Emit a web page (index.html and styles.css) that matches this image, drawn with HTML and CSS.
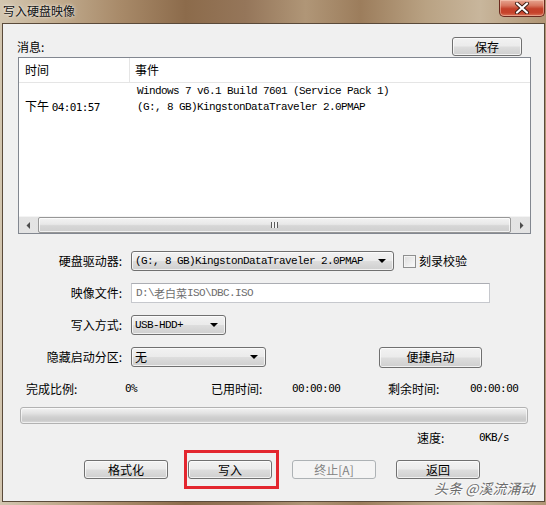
FILE: index.html
```
<!DOCTYPE html>
<html lang="zh">
<head>
<meta charset="utf-8">
<title>写入硬盘映像</title>
<link rel="stylesheet" href="styles.css">
</head>
<body>
<div class="window">
  <div class="titlebar">
    <span class="title">写入硬盘映像</span>
    <div class="close">
      <svg width="18" height="12" viewBox="0 0 18 12"><path d="M4 1.5 L14 10.5 M14 1.5 L4 10.5" stroke="#3a1a12" stroke-width="4" stroke-linecap="round"/><path d="M4 1.5 L14 10.5 M14 1.5 L4 10.5" stroke="#ffffff" stroke-width="2.2" stroke-linecap="round"/></svg>
    </div>
  </div>
  <div class="client">
    <div class="msg-head">
      <span class="msg-label">消息:</span>
      <button class="btn btn-save">保存</button>
    </div>
    <div class="list">
      <div class="list-header">
        <div class="col-time">时间</div>
        <div class="col-event">事件</div>
      </div>
      <div class="list-body">
        <div class="cell-time">下午 <span class="num">04:01:57</span></div>
        <div class="cell-event mono">
          <div class="line">Windows 7 v6.1 Build 7601 (Service Pack 1)</div>
          <div class="line">(G:, 8 GB)KingstonDataTraveler 2.0PMAP</div>
        </div>
      </div>
      <div class="hscroll">
        <div class="sb-btn"><svg width="5" height="7" viewBox="0 0 5 7"><path d="M4 0 L4 7 L0.5 3.5 Z" fill="#4d4d4d"/></svg></div>
        <div class="sb-thumb"><span class="grip"></span></div>
        <div class="sb-btn"><svg width="5" height="7" viewBox="0 0 5 7"><path d="M1 0 L1 7 L4.5 3.5 Z" fill="#4d4d4d"/></svg></div>
      </div>
    </div>

    <div class="form">
      <div class="frow">
        <span class="flabel">硬盘驱动器:</span>
        <div class="combo combo-drive"><span class="mono">(G:, 8 GB)KingstonDataTraveler 2.0PMAP</span><span class="arrow"></span></div>
        <span class="check"></span><span class="check-label">刻录校验</span>
      </div>
      <div class="frow">
        <span class="flabel">映像文件:</span>
        <div class="textbox"><span class="mono">D:\</span>老白菜<span class="mono">ISO\DBC.ISO</span></div>
      </div>
      <div class="frow">
        <span class="flabel">写入方式:</span>
        <div class="combo combo-mode"><span class="mono">USB-HDD+</span><span class="arrow"></span></div>
      </div>
      <div class="frow">
        <span class="flabel">隐藏启动分区:</span>
        <div class="combo combo-hide"><span>无</span><span class="arrow"></span></div>
        <button class="btn btn-quick">便捷启动</button>
      </div>
    </div>

    <div class="stats">
      <span class="s1">完成比例:</span>
      <span class="s2 num">0%</span>
      <span class="s3">已用时间:</span>
      <span class="s4 num">00:00:00</span>
      <span class="s5">剩余时间:</span>
      <span class="num">00:00:00</span>
    </div>
    <div class="progress"></div>
    <div class="speed">
      <span class="speed-label">速度:</span>
      <span class="num">0KB/s</span>
    </div>
    <div class="actions">
      <button class="btn btn-act">格式化</button>
      <div class="highlight"><button class="btn btn-act">写入</button></div>
      <button class="btn btn-act btn-disabled">终止[A]</button>
      <button class="btn btn-act">返回</button>
    </div>
  </div>
  <div class="watermark">头条 @溪流涌动</div>
</div>
</body>
</html>
```

FILE: styles.css
```
html, body {
  margin: 0;
  padding: 0;
}
body {
  width: 546px;
  height: 505px;
  overflow: hidden;
  font-family: "Noto Sans CJK SC", "Noto Sans", sans-serif;
  font-size: 12px;
  color: #000;
}
.window {
  position: relative;
  height: 505px;
  box-sizing: border-box;
  padding: 0 1px 3px 2px;
  display: flex;
  flex-direction: column;
  background: linear-gradient(90deg, #d3c6b0 0%, #c2ad90 10%, #a88a69 22%, #8c6b4b 34%, #95765a 45%, #b09677 56%, #9c7d5c 66%, #b9a283 78%, #c8b69c 88%, #b09574 100%);
}
.titlebar {
  height: 23px;
  flex: none;
  display: flex;
  align-items: flex-start;
}
.title {
  margin: 3px 0 0 1px;
  line-height: 16px;
  font-size: 12px;
  color: #111;
  text-shadow: 0 0 4px rgba(255, 255, 255, 0.75), 0 0 2px rgba(255, 255, 255, 0.6);
}
.close {
  margin-left: auto;
  width: 46px;
  height: 17px;
  box-sizing: border-box;
  border: 1px solid #6b2a1e;
  border-top: none;
  border-radius: 0 0 5px 5px;
  background: linear-gradient(#e7a591 0%, #d7765f 35%, #c3402a 55%, #c6432b 80%, #d9755a 100%);
  box-shadow: inset 0 0 0 1px rgba(255, 220, 200, 0.45);
  display: flex;
  align-items: center;
  justify-content: center;
}
.client {
  flex: 1;
  background: #f0f0f0;
  border: 1px solid #5a4a3a;
  display: flex;
  flex-direction: column;
}
.msg-head {
  display: flex;
  align-items: flex-start;
  height: 33px;
  flex: none;
}
.msg-label {
  margin: 15px 0 0 14px;
  line-height: 16px;
}
.btn {
  font-family: "Noto Sans CJK SC", sans-serif;
  font-size: 12px;
  color: #000;
  padding: 0;
  box-sizing: border-box;
  border: 1px solid #707070;
  border-radius: 3px;
  background: linear-gradient(#f2f2f2 0%, #ebebeb 48%, #dddddd 52%, #cfcfcf 100%);
  box-shadow: inset 0 0 0 1px rgba(255, 255, 255, 0.7);
  line-height: 16px;
}
.btn-save {
  margin: 13px 22px 0 auto;
  width: 70px;
  height: 19px;
}
.list {
  margin-left: 15px;
  width: 513px;
  height: 177px;
  flex: none;
  box-sizing: border-box;
  border: 1px solid #828790;
  background: #fff;
  display: flex;
  flex-direction: column;
}
.list-header {
  height: 25px;
  flex: none;
  box-sizing: border-box;
  border-bottom: 1px solid #e5e5e5;
  display: flex;
  align-items: stretch;
  line-height: 24px;
}
.col-time {
  width: 111px;
  box-sizing: border-box;
  padding-left: 6px;
  border-right: 1px solid #e5e5e5;
}
.col-event {
  padding-left: 5px;
}
.list-body {
  flex: 1;
  display: flex;
  align-items: flex-start;
}
.cell-time {
  width: 111px;
  box-sizing: border-box;
  padding: 15px 0 0 6px;
  line-height: 16px;
}
.cell-event {
  padding-left: 7px;
}
.line {
  height: 16px;
  line-height: 16px;
  white-space: nowrap;
}
.mono {
  font-family: "Liberation Mono", "Noto Sans CJK SC", monospace;
  font-size: 11px;
  letter-spacing: -0.6px;
}
.hscroll {
  height: 17px;
  flex: none;
  display: flex;
  background: linear-gradient(90deg, #e3e3e3, #ececec 50%, #e3e3e3);
  border-top: 1px solid #f4f4f4;
  box-sizing: border-box;
}
.sb-btn {
  width: 18px;
  display: flex;
  align-items: center;
  justify-content: center;
}
.sb-thumb {
  flex: 1;
  margin: 0 1px;
  box-sizing: border-box;
  border: 1px solid #979797;
  border-radius: 2px;
  background: linear-gradient(#f3f3f3 0%, #e8e8e8 45%, #d6d6d6 55%, #cfcfcf 100%);
  box-shadow: inset 0 0 0 1px rgba(255, 255, 255, 0.7);
  display: flex;
  align-items: center;
  justify-content: center;
}
.grip {
  width: 7px;
  height: 6px;
  background: repeating-linear-gradient(90deg, #5c5c5c 0 1px, #f4f4f4 1px 3px);
}
.form {
  margin-top: 17px;
  display: flex;
  flex-direction: column;
  gap: 12px;
  flex: none;
}
.frow {
  display: flex;
  align-items: center;
  height: 20px;
}
.flabel {
  width: 119px;
  margin-right: 9px;
  text-align: right;
  line-height: 16px;
}
.combo {
  height: 20px;
  box-sizing: border-box;
  border: 1px solid #707070;
  border-radius: 3px;
  background: linear-gradient(#f2f2f2 0%, #ebebeb 48%, #dddddd 52%, #cfcfcf 100%);
  box-shadow: inset 0 0 0 1px rgba(255, 255, 255, 0.7);
  display: flex;
  align-items: center;
  padding-left: 3px;
  line-height: 16px;
}
.arrow {
  margin-left: auto;
  margin-right: 7px;
  width: 0;
  height: 0;
  border-left: 4px solid transparent;
  border-right: 4px solid transparent;
  border-top: 4px solid #000;
}
.combo-drive { width: 263px; }
.combo-mode { width: 95px; }
.combo-hide { width: 135px; }
.check {
  margin-left: 9px;
  width: 13px;
  height: 13px;
  box-sizing: border-box;
  border: 1px solid #8e8f8f;
  background: linear-gradient(135deg, #dcdcdc, #fbfbfb);
  box-shadow: inset 0 0 0 1px #f4f4f4;
}
.check-label {
  margin-left: 3px;
  line-height: 16px;
}
.textbox {
  width: 359px;
  height: 20px;
  box-sizing: border-box;
  border: 1px solid #c6c8cd;
  border-top-color: #abadb3;
  background: #fff;
  color: #6d6d6d;
  padding-left: 4px;
  display: flex;
  align-items: center;
  line-height: 16px;
  font-size: 11px;
}
.btn-quick {
  margin-left: 113px;
  width: 103px;
  height: 21px;
}
.stats {
  margin-top: 14px;
  display: flex;
  line-height: 16px;
  padding-left: 23px;
  flex: none;
}
.num {
  font-family: "DejaVu Sans Mono", monospace;
  font-size: 11px;
  letter-spacing: -0.6px;
}
.s1 { width: 99px; }
.s2 { width: 86px; }
.s3 { width: 81px; }
.s4 { width: 96px; }
.s5 { width: 82px; }
.progress {
  margin: 10px 0 0 17px;
  width: 508px;
  height: 17px;
  flex: none;
  box-sizing: border-box;
  border: 1px solid #b2b2b2;
  border-radius: 3px;
  background: linear-gradient(#f3f3f3 0%, #e2e2e2 35%, #d0d0d0 60%, #cacaca 80%, #dadada 100%);
  box-shadow: inset 0 0 0 1px rgba(255, 255, 255, 0.6);
}
.speed {
  margin-top: 6px;
  padding-left: 414px;
  display: flex;
  line-height: 16px;
  flex: none;
}
.speed-label { width: 62px; }
.actions {
  margin-top: 14px;
  padding-left: 81px;
  display: flex;
  align-items: flex-start;
  gap: 20px;
  flex: none;
}
.btn-act {
  width: 84px;
  height: 19px;
}
.btn-disabled {
  border-color: #adb2b5;
  background: #f4f4f4;
  color: #838383;
  box-shadow: none;
}
.highlight {
  position: relative;
  display: flex;
}
.highlight::after {
  content: "";
  position: absolute;
  left: -4px;
  top: -10px;
  width: 95px;
  height: 39px;
  box-sizing: border-box;
  border: 3px solid #e3262e;
}
.watermark {
  position: absolute;
  left: 434px;
  top: 479px;
  font-size: 14px;
  line-height: 18px;
  color: #6a6a6a;
  font-style: italic;
  text-shadow: 0 0 2px #fff, 0 0 2px #fff, 1px 1px 1px #fff;
  white-space: nowrap;
}
```
